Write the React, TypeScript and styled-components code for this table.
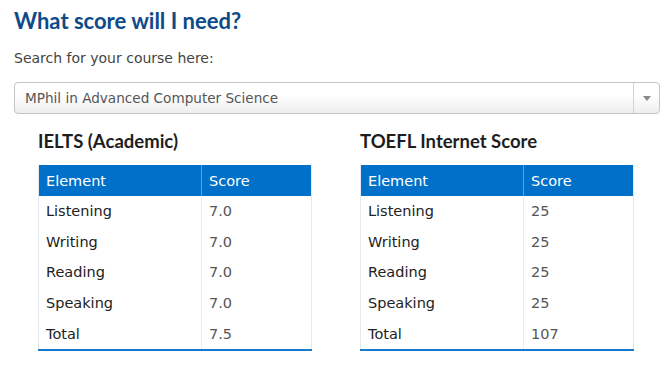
import styled, { createGlobalStyle } from "styled-components";

const GlobalStyle = createGlobalStyle`
  body {
    margin: 0;
    background: #ffffff;
    font-family: "DejaVu Sans", Verdana, sans-serif;
  }
`;

interface ScoreRow {
  element: string;
  score: string;
}

interface ScoreTableProps {
  title: string;
  rows: ScoreRow[];
}

const ielts: ScoreRow[] = [
  { element: "Listening", score: "7.0" },
  { element: "Writing", score: "7.0" },
  { element: "Reading", score: "7.0" },
  { element: "Speaking", score: "7.0" },
  { element: "Total", score: "7.5" },
];

const toefl: ScoreRow[] = [
  { element: "Listening", score: "25" },
  { element: "Writing", score: "25" },
  { element: "Reading", score: "25" },
  { element: "Speaking", score: "25" },
  { element: "Total", score: "107" },
];

const ScoreTable = ({ title, rows }: ScoreTableProps) => (
  <TableBlock>
    <h3>{title}</h3>
    <Table>
      <thead>
        <tr>
          <th>Element</th>
          <th>Score</th>
        </tr>
      </thead>
      <tbody>
        {rows.map((row) => (
          <tr key={row.element}>
            <td>{row.element}</td>
            <td>{row.score}</td>
          </tr>
        ))}
      </tbody>
    </Table>
  </TableBlock>
);

export default function App() {
  return (
    <Page>
      <GlobalStyle />
      <Title>What score will I need?</Title>
      <Label>Search for your course here:</Label>
      <Select>
        <span className="value">MPhil in Advanced Computer Science</span>
        <span className="arrow">
          <svg width="8" height="5" viewBox="0 0 8 5">
            <path d="M0 0 L8 0 L4 5 Z" fill="#8a8a8a" />
          </svg>
        </span>
      </Select>
      <Tables>
        <ScoreTable title="IELTS (Academic)" rows={ielts} />
        <ScoreTable title="TOEFL Internet Score" rows={toefl} />
      </Tables>
    </Page>
  );
}

const Page = styled.div`
  padding: 8px 8px 0 14px;
  width: 668px;
  box-sizing: border-box;
`;

const Title = styled.h1`
  color: #0d4a87;
  font-family: Lato, "Open Sans", sans-serif;
  font-size: 22px;
  font-weight: 700;
  line-height: 26px;
  margin: 0 0 15px;
`;

const Label = styled.p`
  color: #444444;
  font-size: 14px;
  line-height: 18px;
  margin: 0 0 15px;
`;

const Select = styled.div`
  align-items: stretch;
  background: linear-gradient(#ffffff 40%, #eeeeee);
  border: 1px solid #c4c4c4;
  border-radius: 4px;
  box-sizing: border-box;
  display: flex;
  height: 32px;
  width: 646px;

  .value {
    align-items: center;
    color: #555555;
    display: flex;
    flex: 1;
    font-size: 13.6px;
    padding-left: 10px;
  }

  .arrow {
    align-items: center;
    border-left: 1px solid #d4d4d4;
    display: flex;
    justify-content: center;
    width: 25px;
  }
`;

const Tables = styled.div`
  display: grid;
  gap: 48px;
  grid-template-columns: 274px 274px;
  padding: 15px 0 0 24px;
`;

const TableBlock = styled.section`
  h3 {
    color: #1e1e1e;
    font-family: Lato, "Open Sans", sans-serif;
    font-size: 18.5px;
    font-weight: 700;
    line-height: 24px;
    margin: 0 0 12px;
  }
`;

const Table = styled.table`
  border-bottom: 2px solid #1a78cc;
  border-collapse: collapse;
  border-left: 1px solid #e2e8f0;
  border-right: 1px solid #e2e8f0;
  font-size: 14.5px;
  width: 100%;

  th {
    background: #0070c9;
    color: #ffffff;
    font-weight: 400;
    height: 31px;
    padding: 0 7px;
    text-align: left;
  }

  th + th {
    border-left: 1px solid #5aa2e0;
  }

  td {
    color: #222222;
    height: 30.6px;
    padding: 0 7px;
  }

  td + td {
    border-left: 1px solid #eaeaea;
    color: #555555;
  }

  th:first-child,
  td:first-child {
    width: 148px;
  }
`;
